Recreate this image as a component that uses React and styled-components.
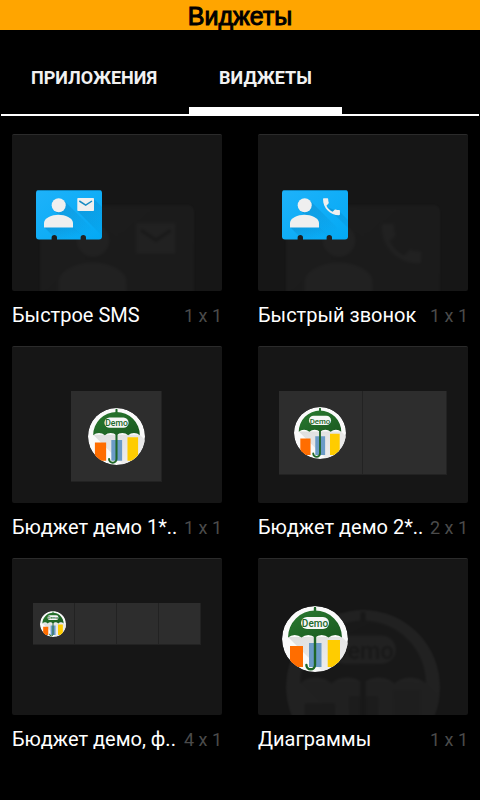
import React, { useId, useState } from "react";
import styled, { createGlobalStyle } from "styled-components";

const GlobalStyle = createGlobalStyle`
  *, *::before, *::after { box-sizing: border-box; }
  body { margin: 0; background: #000; font-family: Roboto, "Noto Sans", sans-serif; }
`;

const Page = styled.div`
  min-height: 100vh;
  background: #000;
  color: #fff;
`;

const TitleBar = styled.header`
  height: 30px;
  background: #ffa500;
`;

const Title = styled.h1`
  margin: 0;
  color: #000;
  font: 400 25px/32px "Liberation Sans", Arial, sans-serif;
  -webkit-text-stroke: 1px #000;
  text-align: center;
`;

const TabList = styled.div`
  display: flex;
  gap: 2px;
  height: 86px;
  margin: 0 1px;
  border-bottom: 2px solid #fff;
`;

const Tab = styled.button`
  padding: 18px 30px 0;
  border: 0;
  border-bottom: 7px solid ${(p) => (p.$active ? "#fff" : "transparent")};
  background: none;
  color: #f1f1f1;
  font: 700 18px/24px Roboto, sans-serif;
  cursor: pointer;
`;

const WidgetGrid = styled.ul`
  display: grid;
  grid-template-columns: repeat(2, minmax(0, 1fr));
  gap: 18px 36px;
  margin: 0;
  padding: 18px 12px;
  list-style: none;
`;

const Preview = styled.div`
  position: relative;
  display: flex;
  justify-content: ${(p) => (p.$launcher ? "flex-start" : "center")};
  align-items: flex-start;
  aspect-ratio: 210 / 157;
  padding: ${(p) => (p.$launcher ? "47px 24px" : "44px 22px 44px 21px")};
  overflow: hidden;
  border-top: 1px solid #2b2b2b;
  border-radius: 2px;
  background: #161616;
`;

const Ghost = styled.div`
  position: absolute;
  top: 51px;
  left: 28px;
  opacity: 0.05;
  filter: grayscale(1) blur(1px);
`;

const LauncherIcon = styled.div`
  position: relative;
  display: flex;
`;

const Tiles = styled.div`
  display: flex;
`;

const Tile = styled.div`
  display: flex;
  align-items: center;
  justify-content: center;
  width: ${(p) => p.$size}px;
  height: ${(p) => p.$size}px;
  border: solid #222;
  border-width: 0 1px 1px 0;
  background: #2d2d2d;
`;

const Caption = styled.div`
  display: flex;
  align-items: baseline;
  justify-content: space-between;
  padding-top: 12px;
  line-height: 24px;
  white-space: nowrap;
`;

const Name = styled.span`
  font-size: 20px;
`;

const Dimensions = styled.span`
  color: #4b4b4b;
  font-size: 18px;
`;

const Drawing = styled.svg`
  display: block;
  width: ${(p) => p.$size}px;
  height: ${(p) => p.$size}px;
`;

function BudgetIcon({ size }) {
  const id = useId();
  return (
    <Drawing $size={size} viewBox="0 0 66 66" aria-hidden="true">
      <defs>
        <clipPath id={`${id}c`}><circle cx="33" cy="33" r="33" /></clipPath>
        <linearGradient id={`${id}g`} x1="0" y1="0" x2="1" y2="1">
          <stop offset="0" stopColor="#2a7a30" />
          <stop offset="1" stopColor="#1a5a20" />
        </linearGradient>
        <linearGradient id={`${id}s`} x1="0" y1="0" x2="0.7" y2="1">
          <stop offset="0" stopColor="#dedede" />
          <stop offset="1" stopColor="#efefef" />
        </linearGradient>
      </defs>
      <g clipPath={`url(#${id}c)`}>
        <circle cx="33" cy="33" r="33" fill="#fafafa" />
        <path d="M6 31 42 67H67V38L60 31Z" fill={`url(#${id}s)`} />
        <path d="M8 40h13v21H8z" fill="#ff6d00" />
        <path d="M27 37h12.500v24H27z" fill="#6b9bc7" />
        <path d="M45.700 34H58v27H45.700z" fill="#ffcc00" />
        <path d="M33 2v57a4.300 4.300 0 0 1-8.600 0" fill="none" stroke="#1f6728" strokeWidth="2.400" strokeLinecap="round" />
        <path
          d="M6 31.500A27 27 0 0 1 60 31.500A10 10 0 0 0 46.500 31.500A10 10 0 0 0 33 31.500A10 10 0 0 0 19.500 31.500A10 10 0 0 0 6 31.500Z"
          fill={`url(#${id}g)`}
        />
        <rect x="19" y="11" width="28" height="12" rx="6" fill="#f7f7f7" />
        <text x="33" y="21" textAnchor="middle" fill="#23692a" fontFamily="Roboto, sans-serif" fontWeight="500" fontSize="10">
          Demo
        </text>
      </g>
    </Drawing>
  );
}

function ContactIcon({ size, action }) {
  const id = useId();
  const body =
    "M3 8H63a3 3 0 0 1 3 3V54.500a3 3 0 0 1-3 3H50V55.800a2.700 2.700 0 0 0-5.400 0V57.500H21V55.800a2.700 2.700 0 0 0-5.400 0V57.500H3a3 3 0 0 1-3-3V11a3 3 0 0 1 3-3Z";
  return (
    <Drawing $size={size} viewBox="0 0 66 66" aria-hidden="true">
      <defs>
        <clipPath id={`${id}c`}><path d={body} /></clipPath>
        <linearGradient id={`${id}b`} x1="0" y1="0" x2="1" y2="1">
          <stop offset="0" stopColor="#1eb2fa" />
          <stop offset="1" stopColor="#03a9f4" />
        </linearGradient>
        <linearGradient id={`${id}s`} x1="0" y1="0" x2="0.8" y2="0.8">
          <stop offset="0" stopColor="#04598f" stopOpacity="0.260" />
          <stop offset="1" stopColor="#04598f" stopOpacity="0" />
        </linearGradient>
      </defs>
      <path d={body} fill={`url(#${id}b)`} />
      <g clipPath={`url(#${id}c)`}>
        <path d="M27.500 18 67 57.500H49L37 45.500L18 28.500Z" fill={`url(#${id}s)`} />
        <path d="M8 45H37L49 57H20Z" fill={`url(#${id}s)`} />
        <path d={action === "mail" ? "M41.500 29 58 17 80 39V60H72Z" : "M45 25 58 30 80 52V60Z"} fill={`url(#${id}s)`} />
        <path d="M0 8.400H66" stroke="#0d75aa" strokeWidth="0.800" />
      </g>
      <circle cx="22.700" cy="23.300" r="7" fill="#efefef" />
      <path d="M8 45.500V41C8 36 16 32.800 22.500 32.800S37 36 37 41V45.500Z" fill="#efefef" />
      {action === "mail" ? (
        <>
          <rect x="41.300" y="16" width="16.700" height="13" rx="0.800" fill="#efefef" />
          <path d="m43.300 19 6.400 4.200L56 19" fill="none" stroke="#178bc3" strokeWidth="1.500" />
        </>
      ) : (
        <path
          transform="translate(38.200 13.500) scale(0.940)"
          d="M6.620 10.790c1.440 2.830 3.760 5.140 6.590 6.590l2.200-2.200c.27-.27.67-.36 1.020-.24 1.120.37 2.330.57 3.570.57.55 0 1 .45 1 1V20c0 .55-.45 1-1 1-9.390 0-17-7.610-17-17 0-.55.45-1 1-1h3.500c.55 0 1 .45 1 1 0 1.250.2 2.450.57 3.570.11.35.03.74-.25 1.020l-2.200 2.200z"
          fill="#efefef"
        />
      )}
    </Drawing>
  );
}

function LauncherPreview({ icon: Icon, action }) {
  return (
    <Preview $launcher>
      <Ghost><Icon size={154} action={action} /></Ghost>
      <LauncherIcon><Icon size={66} action={action} /></LauncherIcon>
    </Preview>
  );
}

function TilePreview({ count, tile, icon }) {
  return (
    <Preview>
      <Tiles>
        {Array.from({ length: count }, (_, i) => (
          <Tile key={i} $size={tile}>{i === 0 && <BudgetIcon size={icon} />}</Tile>
        ))}
      </Tiles>
    </Preview>
  );
}

const widgets = [
  { name: "Быстрое SMS", dims: "1 x 1", preview: <LauncherPreview icon={ContactIcon} action="mail" /> },
  { name: "Быстрый звонок", dims: "1 x 1", preview: <LauncherPreview icon={ContactIcon} action="call" /> },
  { name: "Бюджет демо 1*..", dims: "1 x 1", preview: <TilePreview count={1} tile={91} icon={57} /> },
  { name: "Бюджет демо 2*..", dims: "2 x 1", preview: <TilePreview count={2} tile={84} icon={52} /> },
  { name: "Бюджет демо, ф..", dims: "4 x 1", preview: <TilePreview count={4} tile={42} icon={26} /> },
  { name: "Диаграммы", dims: "1 x 1", preview: <LauncherPreview icon={BudgetIcon} /> },
];

const tabs = ["ПРИЛОЖЕНИЯ", "ВИДЖЕТЫ"];

export default function App() {
  const [active, setActive] = useState(1);
  return (
    <Page>
      <GlobalStyle />
      <TitleBar><Title>Виджеты</Title></TitleBar>
      <TabList role="tablist">
        {tabs.map((label, i) => (
          <Tab key={label} type="button" role="tab" aria-selected={i === active} $active={i === active} onClick={() => setActive(i)}>
            {label}
          </Tab>
        ))}
      </TabList>
      <WidgetGrid>
        {widgets.map((w) => (
          <li key={w.name}>
            {w.preview}
            <Caption>
              <Name>{w.name}</Name>
              <Dimensions>{w.dims}</Dimensions>
            </Caption>
          </li>
        ))}
      </WidgetGrid>
    </Page>
  );
}
